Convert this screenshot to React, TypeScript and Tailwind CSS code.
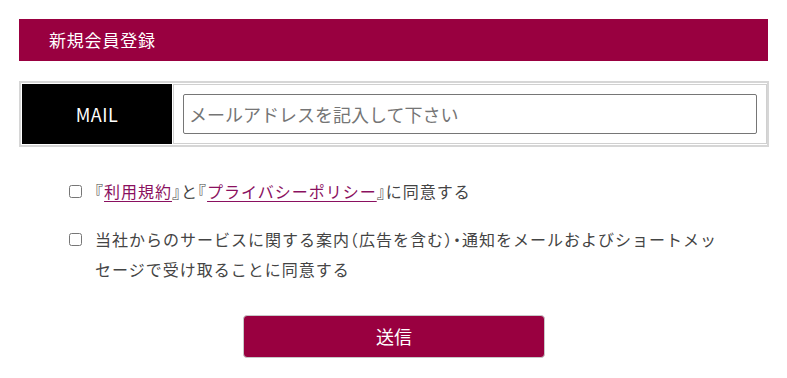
import React from "react";

export default function App() {
  const font = { fontFamily: '"Noto Sans CJK JP", "Noto Sans", sans-serif' };
  return (
    <div className="w-[787px] h-[378px] bg-white overflow-hidden" style={font}>
      <div className="pt-[19px] pl-[19px] w-[769px]">
        <div className="h-[42px] w-[749px] bg-[#990040] flex items-center pl-[30px] text-white text-[17px] tracking-[0.8px]">
          新規会員登録
        </div>

        <div className="mt-[20px] w-[750px] h-[66px] border-2 border-[#d6d6d6] flex pl-px pr-0 py-px">
          <div className="w-[150px] bg-black text-white text-[18px] tracking-[0.5px] flex items-center justify-center">
            MAIL
          </div>
          <div className="flex-1 ml-px border border-[#d0d0d0] flex items-center pl-[9px] pr-[9px]">
            <input
              type="text"
              placeholder="メールアドレスを記入して下さい"
              className="w-full h-[40px] border border-[#767676] rounded-[2px] px-[5px] text-[18px] text-[#333] placeholder:text-[#757575] outline-none"
              style={font}
            />
          </div>
        </div>

        <div className="mt-[29px] pl-[50px] text-[16px] text-[#444] tracking-[1px] leading-[30px] [font-feature-settings:'halt']">
          <label className="flex items-start gap-[13px]">
            <input type="checkbox" className="w-[13px] h-[13px] m-0 mt-[9px] shrink-0" />
            <span>
              『<a className="text-[#8a1060] underline underline-offset-[3px]">利用規約</a>』と『<a className="text-[#8a1060] underline underline-offset-[3px]">プライバシーポリシー</a>』に同意する
            </span>
          </label>
          <label className="flex items-start gap-[13px] mt-[18px]">
            <input type="checkbox" className="w-[13px] h-[13px] m-0 mt-[9px] shrink-0" />
            <span className="w-[628px]">
              当社からのサービスに関する案内（広告を含む）・通知をメールおよびショートメッセージで受け取ることに同意する
            </span>
          </label>
        </div>

        <div className="mt-[31px] w-[750px] flex justify-center">
          <button className="w-[302px] h-[43px] bg-[#990040] border border-[#c8c8c8] rounded-[4px] text-white text-[18px]" style={font}>
            送信
          </button>
        </div>
      </div>
    </div>
  );
}
